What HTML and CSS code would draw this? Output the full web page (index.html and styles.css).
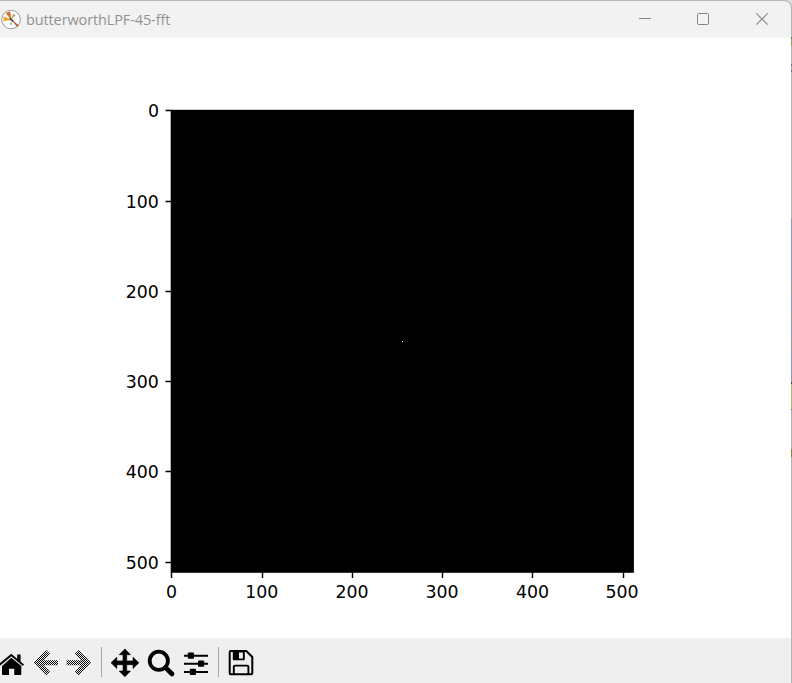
FILE: index.html
```html
<!DOCTYPE html>
<html lang="en">
<head>
<meta charset="utf-8">
<title>butterworthLPF-45-fft</title>
<link rel="stylesheet" href="styles.css">
</head>
<body>
<div class="window">
<header class="titlebar">
  <svg class="app-icon" width="20" height="20" viewBox="0 0 20 20">
    <circle cx="10" cy="9.5" r="9.3" fill="#fff" stroke="#858585" stroke-width=".8"/>
    <path d="M10.3 9.6 5 3.2 8.8 1.6Z" fill="#e8631b" stroke="#b4602a" stroke-width=".4"/>
    <path d="M10 9.8 2.6 10.8 2.9 6.8Z" fill="#f5a916" stroke="#c08a1e" stroke-width=".4"/>
    <path d="M10.8 8.5 12.2 4.4 14.2 5.1Z" fill="#a8b83a" stroke="#75802d" stroke-width=".4"/>
    <path d="M10 10.5 9 14.8 11 14.8Z" fill="#68c84e"/>
    <path d="M10.3 9.5 17.3 15.3 16.1 16.6Z" fill="#d5501c" stroke="#a0401c" stroke-width=".5"/>
    <path d="M8.8 8.3 12.2 11.2" stroke="#292620" stroke-width="1.3"/>
  </svg>
  <span class="title">butterworthLPF-45-fft</span>
  <svg class="controls" width="142" height="37" viewBox="630 1 142 37">
    <path d="M639 18.5h12" stroke="#858585"/>
    <rect x="697.5" y="13.5" width="11" height="11" rx="1" fill="none" stroke="#858585"/>
    <path d="M756.3 13.3 767.7 24.7M767.7 13.3 756.3 24.7" stroke="#858585" stroke-width="1.1"/>
  </svg>
</header>
<main class="figure">
  <svg width="791" height="600" viewBox="0 38 791 600">
    <rect x="170.7" y="109.8" width="463.2" height="463" fill="#000"/>
    <rect x="402" y="341" width="1" height="1" fill="#fff"/>
    <g stroke="#000" stroke-width="1.4">
      <path d="M165.5 110.5h6M165.5 201.5h6M165.5 291.5h6M165.5 381.5h6M165.5 471.5h6M165.5 562.5h6"/>
      <path d="M171.5 572v6M262.5 572v6M352.5 572v6M442.5 572v6M532.5 572v6M623.5 572v6"/>
    </g>
    <g class="tick y">
      <text x="159" y="117">0</text><text x="158.8" y="207.5">100</text><text x="158.8" y="297.5">200</text>
      <text x="158.8" y="387.5">300</text><text x="158.8" y="477.5">400</text><text x="158.8" y="568.5">500</text>
    </g>
    <g class="tick x">
      <text x="171.5" y="598">0</text><text x="261.7" y="598">100</text><text x="352" y="598">200</text>
      <text x="442" y="598">300</text><text x="532.5" y="598">400</text><text x="622" y="598">500</text>
    </g>
  </svg>
</main>
<footer class="toolbar">
  <svg width="29" height="45" viewBox="0 638 29 45">
    <path d="M11.3 657.7 21.3 666v8q0 1-1 1h-6v-6.2H9v6.2H3q-1 0-1-1V666Z"/>
    <path d="M-2 666 11.3 655 23.4 665.3" fill="none" stroke="#000" stroke-width="2"/>
    <path d="M17.2 654.5h3.4v7.8l-3.4-3Z"/>
  </svg>
  <svg width="33" height="45" viewBox="29 638 33 45">
    <defs><pattern id="stipple" width="2" height="2" patternUnits="userSpaceOnUse"><path d="M0 0h1v1H0ZM1 1h1v1H1Z" shape-rendering="crispEdges"/></pattern></defs>
    <path d="M33.6 662.7 46 650 50 653.7 43.6 660.2H58V665.2H43.6L50 671.7 46 675.6Z" fill="url(#stipple)"/>
  </svg>
  <svg width="34" height="45" viewBox="62 638 34 45">
    <path d="M91 662.7 78.8 650 74.8 653.7 81.2 660.2H66.6V665.2H81.2L74.8 671.7 78.8 675.6Z" fill="url(#stipple)"/>
  </svg>
  <i class="separator"></i>
  <svg width="36" height="45" viewBox="107 638 36 45">
    <path d="M124.9 648.9 130.5 654.7H126.7V660.9H133V657.2L138.9 662.8 133 668.5V664.7H126.7V671H130.5L124.9 676.8 119.2 671H123V664.7H116.8V668.5L111 662.8 116.8 657.2V660.9H123V654.7H119.2Z" stroke="#000" stroke-width=".6" stroke-linejoin="round"/>
  </svg>
  <svg width="36" height="45" viewBox="143 638 36 45">
    <circle cx="158.8" cy="660.8" r="9.1" fill="none" stroke="#000" stroke-width="3.8"/>
    <path d="M165.5 667.5 172 674" stroke="#000" stroke-width="4.6" stroke-linecap="round"/>
  </svg>
  <svg width="34" height="45" viewBox="179 638 34 45">
    <path d="M184 655.7h24M184 663.7h24M184 671.9h24" stroke="#000" stroke-width="2"/>
    <rect x="187.8" y="652.5" width="6.2" height="6.3" rx="1"/><rect x="198" y="660.5" width="6.2" height="6.3" rx="1"/><rect x="189.8" y="668.7" width="6.2" height="6.3" rx="1"/>
  </svg>
  <i class="separator second"></i>
  <svg width="40" height="45" viewBox="223 638 40 45">
    <path d="M230.7 651h15.6l6 6v16q0 1.3-1.3 1.3h-20.3q-1 0-1-1.2v-20.9q0-1.2 1-1.2Z" fill="none" stroke="#000" stroke-width="2"/>
    <path d="M232.8 651h12v8.3q0 1-1 1h-10q-1 0-1-1ZM239 652.5v6h3.9v-6Z" fill-rule="evenodd"/>
    <path d="M233.8 674v-7.2q0-1.2 1.2-1.2h12.2q1.2 0 1.2 1.2v7.2" fill="none" stroke="#000" stroke-width="1.9"/>
  </svg>
</footer>
</div>
</body>
</html>
```

FILE: styles.css
```css
* { box-sizing: border-box; }
body { margin: 0; overflow: hidden; background: #e0e0e0; }
svg { display: block; flex: none; }
.window {
  width: 792px;
  height: 683px;
  padding-right: 1px;
  border-top: 1px solid #b9b9b9;
  border-top-right-radius: 8px;
  overflow: hidden;
  background: linear-gradient(#b4b4b4 0 36px, #557c68 36px 38px, #a79a6a 38px 45px, #b4b4b4 45px 63px, #666792 63px 65px, #aaa0a8 65px 69px, #606399 69px 71px, #b4b4b4 71px 217px, #9297b8 217px 283px, #8c9f99 283px 292px, #9297b8 292px 311px, #8c9f99 311px 320px, #9297b8 320px 338px, #8c9f99 338px 347px, #9297b8 347px 381px, #44444c 381px 383px, #b5b570 383px 408px, #666 408px 409px, #b5b0b5 409px 448px, #7e8148 448px 456px, #b4b4b4 456px);
}
.titlebar {
  display: flex;
  align-items: center;
  height: 37px;
  background: #f2f2f2;
  border-top-right-radius: 7px;
}
.app-icon { margin-left: 1px; }
.title {
  margin-left: 5px;
  font: 14.5px/20px "Open Sans", "Noto Sans", sans-serif;
  letter-spacing: -0.12px;
  color: #929292;
  white-space: nowrap;
}
.controls { margin-left: auto; margin-right: 19px; }
.figure { height: 600px; background: #fff; }
.tick { font: 17.36px "DejaVu Sans", sans-serif; }
.y { text-anchor: end; }
.x { text-anchor: middle; }
.toolbar { display: flex; height: 45px; background: #efefef; }
.separator { width: 1px; height: 30px; margin: 9px 5px 0; background: #a8a8a8; }
.second { margin-right: 4px; }
```
